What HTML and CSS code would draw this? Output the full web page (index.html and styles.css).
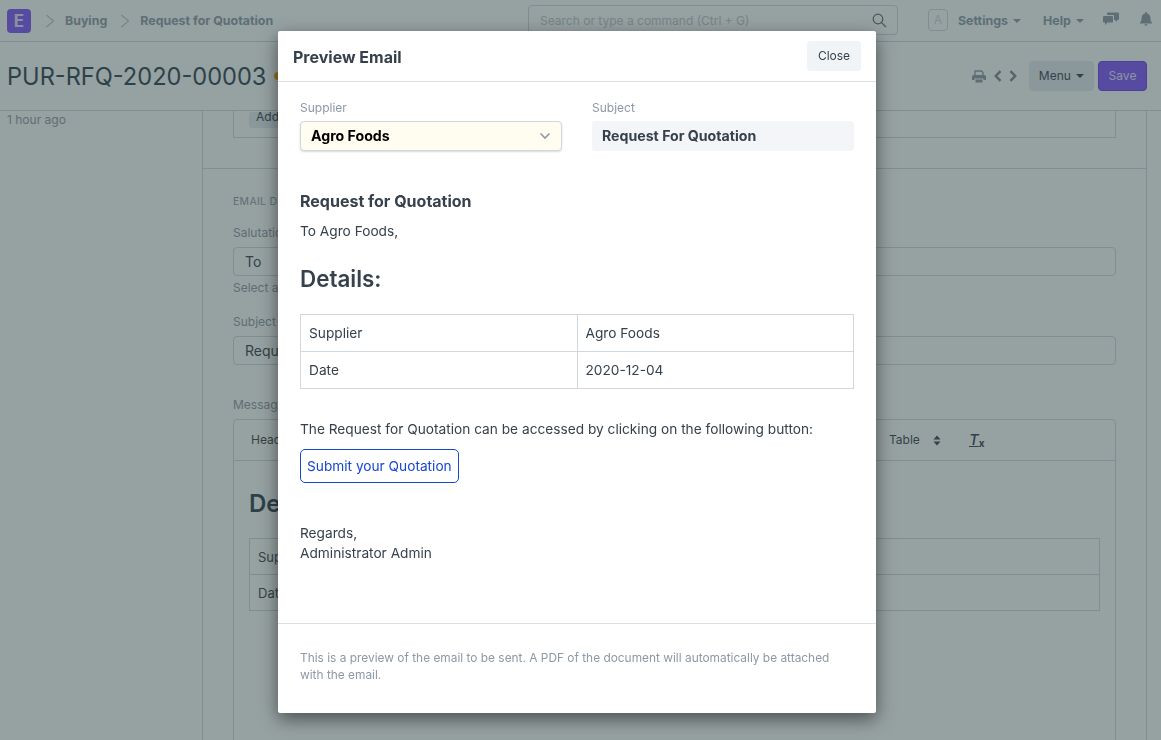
FILE: index.html
```html
<!DOCTYPE html>
<html lang="en">
<head>
  <meta charset="UTF-8">
  <title>Request for Quotation</title>
  <link rel="stylesheet" href="styles.css">
</head>
<body>
  <div class="page">
    <header class="navbar">
      <div class="logo">E</div>
      <svg class="crumb-arrow" width="10" height="14" viewBox="0 0 10 14"><path d="M1.5 1 L8.5 7 L1.5 13" /></svg>
      <span class="crumb">Buying</span>
      <svg class="crumb-arrow crumb-arrow-last" width="10" height="14" viewBox="0 0 10 14"><path d="M1.5 1 L8.5 7 L1.5 13" /></svg>
      <span class="crumb">Request for Quotation</span>
      <div class="search">
        <span>Search or type a command (Ctrl + G)</span>
        <svg width="15" height="15" viewBox="0 0 15 15"><circle cx="6" cy="6" r="4.8" /><path d="M9.6 9.6 L14 14" /></svg>
      </div>
      <div class="avatar">A</div>
      <span class="nav-link nav-settings">Settings <i class="caret"></i></span>
      <span class="nav-link nav-help">Help <i class="caret"></i></span>
      <svg class="nav-icon nav-chat" width="16" height="14" viewBox="0 0 16 14"><path d="M5 0.5 H15 a1 1 0 0 1 1 1 V7 a1 1 0 0 1 -1 1 H14 V10 L12 8 H11 V4 a1 1 0 0 0 -1 -1 H4 V1.5 a1 1 0 0 1 1 -1 Z" /><path d="M1 4 H9 a1 1 0 0 1 1 1 V9.5 a1 1 0 0 1 -1 1 H4.5 L2 13 V10.5 H1 a1 1 0 0 1 -1 -1 V5 a1 1 0 0 1 1 -1 Z" /></svg>
      <svg class="nav-icon nav-bell" width="12" height="14" viewBox="0 0 12 14"><path d="M6 0 a1 1 0 0 1 1 1 V1.6 C9.2 2 10.4 3.8 10.4 6 C10.4 8.6 11 9.6 12 10.6 V11.4 H0 V10.6 C1 9.6 1.6 8.6 1.6 6 C1.6 3.8 2.8 2 5 1.6 V1 A1 1 0 0 1 6 0 Z M4.4 12.2 H7.6 A1.6 1.6 0 0 1 4.4 12.2 Z" /></svg>
    </header>

    <div class="page-head">
      <h1 class="doc-title">PUR-RFQ-2020-00003</h1>
      <i class="status-dot"></i>
      <div class="page-actions">
        <svg class="act-icon" width="14" height="13" viewBox="0 0 14 13"><path d="M3 5 V1 H9.5 L11 2.5 V5" class="print-line" /><path d="M1.5 5 H12.5 A1.5 1.5 0 0 1 14 6.5 V10 H11.5 V8.5 H2.5 V10 H0 V6.5 A1.5 1.5 0 0 1 1.5 5 Z" /><path d="M3.5 9.5 H10.5 V12.5 H3.5 Z" /></svg>
        <svg class="angle angle-prev" width="8" height="12" viewBox="0 0 8 12"><path d="M6.5 1.2 L1.8 6 L6.5 10.8" /></svg>
        <svg class="angle angle-next" width="8" height="12" viewBox="0 0 8 12"><path d="M1.5 1.2 L6.2 6 L1.5 10.8" /></svg>
        <button class="btn-menu">Menu <i class="caret"></i></button>
        <button class="btn-save">Save</button>
      </div>
    </div>

    <div class="page-body">
      <aside class="sidebar">1 hour ago</aside>
      <main class="form">
        <section class="section-top">
          <div class="grid-box"><span class="btn-add">Add Row</span></div>
        </section>
        <section class="section-email">
          <div class="section-title">EMAIL DETAILS</div>
          <label class="bg-label">Salutation</label>
          <div class="bg-input">To</div>
          <div class="bg-help">Select a salutation</div>
          <label class="bg-label label-subject">Subject</label>
          <div class="bg-input bg-input-subject">Request for Quotation</div>
          <label class="bg-label label-message">Message for Supplier</label>
          <div class="editor">
            <div class="editor-bar">
              <span class="bar-item">Heading</span>
              <span class="bar-table">Table</span>
              <svg class="updown" width="8" height="11" viewBox="0 0 8 11"><path d="M4 0.5 L7.5 4.4 H0.5 Z M4 10.5 L7.5 6.6 H0.5 Z" /></svg>
              <span class="clear-format"><em>T</em><b>x</b></span>
            </div>
            <div class="editor-body">
              <h2>Details:</h2>
              <table class="bg-table">
                <tr><td>Supplier</td><td>Agro Foods</td></tr>
                <tr><td>Date</td><td>2020-12-04</td></tr>
              </table>
            </div>
          </div>
        </section>
      </main>
    </div>
  </div>

  <div class="backdrop"></div>

  <div class="modal">
    <div class="modal-header">
      <h4>Preview Email</h4>
      <button class="btn-close">Close</button>
    </div>
    <div class="modal-body">
      <div class="fields">
        <div class="field">
          <label>Supplier</label>
          <div class="select-box">
            <span>Agro Foods</span>
            <svg width="12" height="8" viewBox="0 0 12 8"><path d="M1.5 1.5 L6 6 L10.5 1.5" /></svg>
          </div>
        </div>
        <div class="field">
          <label>Subject</label>
          <div class="subject-box">Request For Quotation</div>
        </div>
      </div>
      <h5 class="mail-title">Request for Quotation</h5>
      <p class="mail-to">To Agro Foods,</p>
      <h2 class="mail-details">Details:</h2>
      <table class="mail-table">
        <tr><td>Supplier</td><td>Agro Foods</td></tr>
        <tr><td>Date</td><td>2020-12-04</td></tr>
      </table>
      <p class="mail-access">The Request for Quotation can be accessed by clicking on the following button:</p>
      <a class="btn-quote">Submit your Quotation</a>
      <p class="mail-regards">Regards,<br>Administrator Admin</p>
    </div>
    <div class="modal-footer">This is a preview of the email to be sent. A PDF of the document will automatically be attached with the email.</div>
  </div>
</body>
</html>
```

FILE: styles.css
```css
* {
  box-sizing: border-box;
}

html, body {
  height: 100%;
}

body {
  margin: 0;
  background: #fff;
  color: #36414c;
  font-family: Inter, "Noto Sans", sans-serif;
  font-size: 14px;
  overflow: hidden;
}

.page {
  height: 740px;
  overflow: hidden;
}

.caret {
  display: inline-block;
  width: 0;
  height: 0;
  margin-left: 2px;
  vertical-align: 2px;
  border-top: 4px solid currentColor;
  border-left: 4px solid transparent;
  border-right: 4px solid transparent;
}

/* navbar */
.navbar {
  height: 42px;
  display: flex;
  align-items: center;
  padding-left: 7px;
  border-bottom: 1px solid #d1d8dd;
}

.logo {
  width: 24px;
  height: 24px;
  border-radius: 4px;
  background: #8050ff;
  color: #e4e0f4;
  font-size: 17px;
  font-weight: 700;
  text-align: center;
  line-height: 24px;
}

.crumb-arrow {
  margin-left: 14px;
  margin-right: 10px;
  flex: none;
}

.crumb-arrow-last {
  margin-left: 13px;
}

.crumb-arrow path {
  fill: none;
  stroke: #c0c6cc;
  stroke-width: 1.2;
}

.crumb {
  font-size: 12.4px;
  font-weight: 700;
  color: #8d99a6;
}

.search {
  position: absolute;
  left: 528px;
  top: 5px;
  width: 370px;
  height: 30px;
  display: flex;
  align-items: center;
  justify-content: space-between;
  padding: 0 11px;
  border: 1px solid #d1d8dd;
  border-radius: 4px;
  font-size: 12px;
  color: #c0c6cc;
}

.search svg {
  margin-right: -1px;
}

.search circle, .search path {
  fill: none;
  stroke: #5f6b75;
  stroke-width: 1.2;
}

.avatar {
  position: absolute;
  left: 928px;
  top: 9px;
  width: 20px;
  height: 22px;
  border: 1px solid #d1d8dd;
  border-radius: 4px;
  text-align: center;
  font-size: 12px;
  line-height: 20px;
  color: #d1d8dd;
}

.nav-link {
  position: absolute;
  top: 13px;
  font-size: 12.4px;
  font-weight: 700;
  color: #8d99a6;
}

.nav-settings {
  left: 958px;
}

.nav-help {
  left: 1043px;
}

.nav-icon {
  position: absolute;
  fill: #8d99a6;
}

.nav-chat {
  left: 1103px;
  top: 12px;
}

.nav-bell {
  left: 1140px;
  top: 12px;
}

/* page head */
.page-head {
  height: 69px;
  display: flex;
  align-items: center;
  padding: 0 7px;
  border-bottom: 1px solid #d1d8dd;
}

.doc-title {
  margin: 0;
  font-size: 23.6px;
  font-weight: 400;
  color: #2c3e50;
}

.status-dot {
  width: 8px;
  height: 8px;
  margin-left: 8px;
  border-radius: 50%;
  background: #f8a100;
}

.page-actions {
  margin-left: auto;
  margin-right: 7px;
  display: flex;
  align-items: center;
}

.act-icon {
  margin-right: 8px;
  fill: #8d99a6;
}

.print-line {
  fill: none;
  stroke: #8d99a6;
  stroke-width: 1.4;
}

.angle {
  fill: none;
  stroke: #7a8691;
  stroke-width: 2.4;
  margin-right: 7px;
}

.angle-next {
  margin-right: 12px;
}

.btn-menu, .btn-save {
  height: 30px;
  border-radius: 4px;
  font-family: inherit;
  font-size: 12px;
}

.btn-menu {
  width: 65px;
  margin-right: 4px;
  padding: 0 0 1px;
  border: none;
  background: #e6ebf3;
  color: #36414c;
}

.btn-save {
  width: 49px;
  padding: 0 0 1px;
  border: 1px solid #6a3ee8;
  background: #8050ff;
  color: #e8e4fa;
}

/* form behind the dialog */
.page-body {
  display: flex;
}

.sidebar {
  width: 202px;
  padding: 0 7px;
  font-size: 12px;
  line-height: 17px;
  color: #8d99a6;
}

.form {
  width: 945px;
  height: 630px;
  border-left: 1px solid #d1d8dd;
  border-right: 1px solid #d1d8dd;
}

.section-top {
  height: 58px;
  padding: 0 30px 0 30px;
  border-bottom: 1px solid #d1d8dd;
}

.grid-box {
  height: 27px;
  padding-left: 15px;
  border: 1px solid #d1d8dd;
  border-top: none;
  line-height: 10px;
}

.btn-add {
  display: inline-block;
  height: 16px;
  padding: 0 7px;
  border-radius: 3px;
  background: #e6ebf3;
  font-size: 12px;
  line-height: 10px;
}

.section-email {
  padding: 26px 30px 0 30px;
}

.section-title {
  font-size: 10.5px;
  line-height: 13px;
  letter-spacing: 0.3px;
  color: #8d99a6;
}

.bg-label {
  display: block;
  margin-top: 16px;
  font-size: 12px;
  line-height: 17px;
  color: #8d99a6;
}

.label-subject {
  margin-top: 20px;
  line-height: 14px;
}

.label-message {
  margin-top: 33px;
  line-height: 14px;
}

.bg-input {
  height: 29px;
  margin-top: 6px;
  padding: 0 11px;
  border: 1px solid #d1d8dd;
  border-radius: 4px;
  font-size: 14px;
  line-height: 27px;
  color: #36414c;
}

.bg-input-subject {
  margin-top: 7px;
}

.bg-help {
  margin-top: 5px;
  font-size: 12px;
  line-height: 14px;
  color: #8d99a6;
}

.editor {
  height: 340px;
  margin-top: 7px;
  border: 1px solid #d1d8dd;
  border-radius: 4px 4px 0 0;
}

.editor-bar {
  position: relative;
  height: 41px;
  padding-left: 17px;
  border-bottom: 1px solid #d1d8dd;
  font-size: 12px;
  line-height: 40px;
  color: #36414c;
}

.bar-table {
  position: absolute;
  left: 655px;
}

.updown {
  position: absolute;
  left: 699px;
  top: 15px;
  fill: #36414c;
}

.clear-format {
  position: absolute;
  left: 735px;
  top: 0;
  font-size: 15px;
}

.clear-format em {
  text-decoration: underline;
  font-weight: 500;
}

.clear-format b {
  font-size: 10px;
  vertical-align: -2px;
}

.editor-body {
  padding: 28px 15px 0;
}

.editor-body h2 {
  margin: 0 0 20px;
  font-size: 24px;
  font-weight: 600;
  line-height: 29px;
  color: #2c3e50;
}

.bg-table {
  width: 100%;
  border-collapse: collapse;
  font-size: 13px;
}

.bg-table td {
  height: 36px;
  padding: 0 8px;
  border: 1px solid #d1d8dd;
}

.backdrop {
  position: fixed;
  inset: 0;
  background: rgba(45, 67, 67, 0.5);
}

/* dialog */
.modal {
  position: fixed;
  left: 278px;
  top: 31px;
  width: 598px;
  height: 682px;
  display: flex;
  flex-direction: column;
  background: #fff;
  border-radius: 2px;
  box-shadow: 0 6px 18px rgba(0, 0, 0, 0.5);
  font-size: 13.7px;
}

.modal-header {
  height: 51px;
  flex: none;
  display: flex;
  align-items: center;
  justify-content: space-between;
  padding: 0 15px;
  border-bottom: 1px solid #dcdfe3;
}

.modal-header h4 {
  margin: 1px 0 0;
  font-size: 16px;
  font-weight: 700;
  color: #36414c;
}

.btn-close {
  width: 54px;
  height: 30px;
  padding: 0 0 2px;
  border: none;
  border-radius: 4px;
  background: #f0f4f7;
  font-family: inherit;
  font-size: 12px;
  color: #36414c;
}

.modal-body {
  flex: 1;
  padding: 0 22px;
  border-bottom: 1px solid #dcdfe3;
}

.fields {
  display: grid;
  grid-template-columns: 262px 262px;
  column-gap: 30px;
  padding-top: 19px;
}

.field label {
  display: block;
  font-size: 12px;
  line-height: 14px;
  color: #8d99a6;
}

.select-box, .subject-box {
  height: 30px;
  margin-top: 6px;
  font-size: 14.15px;
  font-weight: 700;
  line-height: 28px;
}

.select-box {
  display: flex;
  align-items: center;
  justify-content: space-between;
  padding: 0 10px;
  background: #fffdf0;
  border: 1px solid #d1d8dd;
  border-radius: 4px;
  box-shadow: 0 1px 2px rgba(0, 0, 0, 0.15);
  color: #000;
}

.select-box svg {
  fill: none;
  stroke: #8d99a6;
  stroke-width: 1.6;
}

.subject-box {
  padding: 0 10px;
  background: #f4f5f9;
  border-radius: 3px;
  line-height: 30px;
  color: #36414c;
}

.mail-title {
  margin: 41px 0 0;
  font-size: 16px;
  font-weight: 700;
  line-height: 19px;
  color: #36414c;
}

.mail-to {
  margin: 12px 0 0;
  line-height: 17px;
}

.mail-details {
  margin: 24px 0 0;
  font-size: 22.4px;
  font-weight: 600;
  line-height: 29px;
}

.mail-table {
  width: 554px;
  margin-top: 21px;
  border-collapse: collapse;
  table-layout: fixed;
}

.mail-table td {
  height: 37px;
  padding: 0 8px;
  border: 1px solid #d1d8dd;
}

.mail-access {
  margin: 32px 0 0;
  line-height: 17px;
}

.btn-quote {
  display: inline-block;
  height: 34px;
  margin-top: 11px;
  padding: 0 6px;
  border: 1px solid #1746d1;
  border-radius: 5px;
  line-height: 32px;
  color: #1746d1;
}

.mail-regards {
  margin: 40px 0 0;
  line-height: 20px;
}

.modal-footer {
  height: 89px;
  flex: none;
  padding: 25px 40px 0 22px;
  font-size: 11.9px;
  line-height: 17px;
  color: #8d99a6;
}
```
